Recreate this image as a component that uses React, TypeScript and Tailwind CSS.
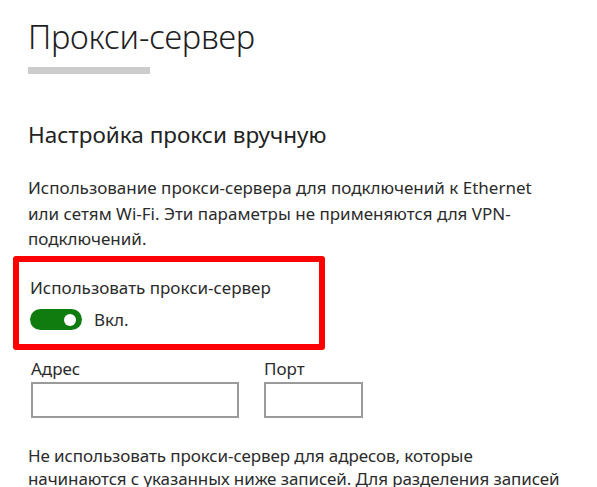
const font = { fontFamily: '"Noto Sans", "Open Sans", sans-serif' };

export default function App() {
  return (
    <div
      className="w-[597px] h-[487px] overflow-hidden bg-white text-[#222] pl-[28px]"
      style={font}
    >
      <h1 className="pt-[17px] text-[32.5px] leading-[40px] font-light text-[#1f1f1f] tracking-[-0.2px] whitespace-nowrap">
        Прокси-сервер
      </h1>
      <div className="mt-[10px] h-[7px] w-[122px] bg-[#cccccc]" />

      <h2 className="mt-[47px] text-[22.5px] leading-[28px] text-[#222] whitespace-nowrap">
        Настройка прокси вручную
      </h2>

      <p className="mt-[26px] text-[17px] leading-[25.5px] text-[#2b2b2b] whitespace-nowrap">
        Использование прокси-сервера для подключений к Ethernet
        <br />
        или сетям Wi-Fi. Эти параметры не применяются для VPN-
        <br />
        подключений.
      </p>

      <div className="mt-[4px] -ml-[15px] w-[312px] h-[94px] rounded-[3px] border-[6px] border-[#ff0000] pl-[11px] pt-[15px]">
        <div className="text-[17px] leading-[22px] text-[#2b2b2b] whitespace-nowrap">Использовать прокси-сервер</div>
        <div className="mt-[10px] flex items-center gap-[12px]">
          <div className="flex h-[21px] w-[52px] items-center justify-end rounded-full bg-[#107c10] pr-[6px]">
            <div className="h-[12px] w-[12px] rounded-full bg-white" />
          </div>
          <span className="text-[17px] leading-[22px] text-[#2b2b2b]">Вкл.</span>
        </div>
      </div>

      <div className="mt-[9px] flex gap-[25px] pl-[3px]">
        <div className="flex flex-col">
          <span className="text-[17px] leading-[20px] text-[#2b2b2b]">Адрес</span>
          <div className="mt-[3px] h-[36px] w-[208px] border-2 border-[#9a9a9a]" />
        </div>
        <div className="flex flex-col">
          <span className="text-[17px] leading-[20px] text-[#2b2b2b]">Порт</span>
          <div className="mt-[3px] h-[36px] w-[99px] border-2 border-[#9a9a9a]" />
        </div>
      </div>

      <p className="mt-[26px] text-[17px] leading-[23px] text-[#2b2b2b] whitespace-nowrap tracking-[-0.1px]">
        Не использовать прокси-сервер для адресов, которые
        <br />
        начинаются с указанных ниже записей. Для разделения записей
      </p>
    </div>
  );
}
